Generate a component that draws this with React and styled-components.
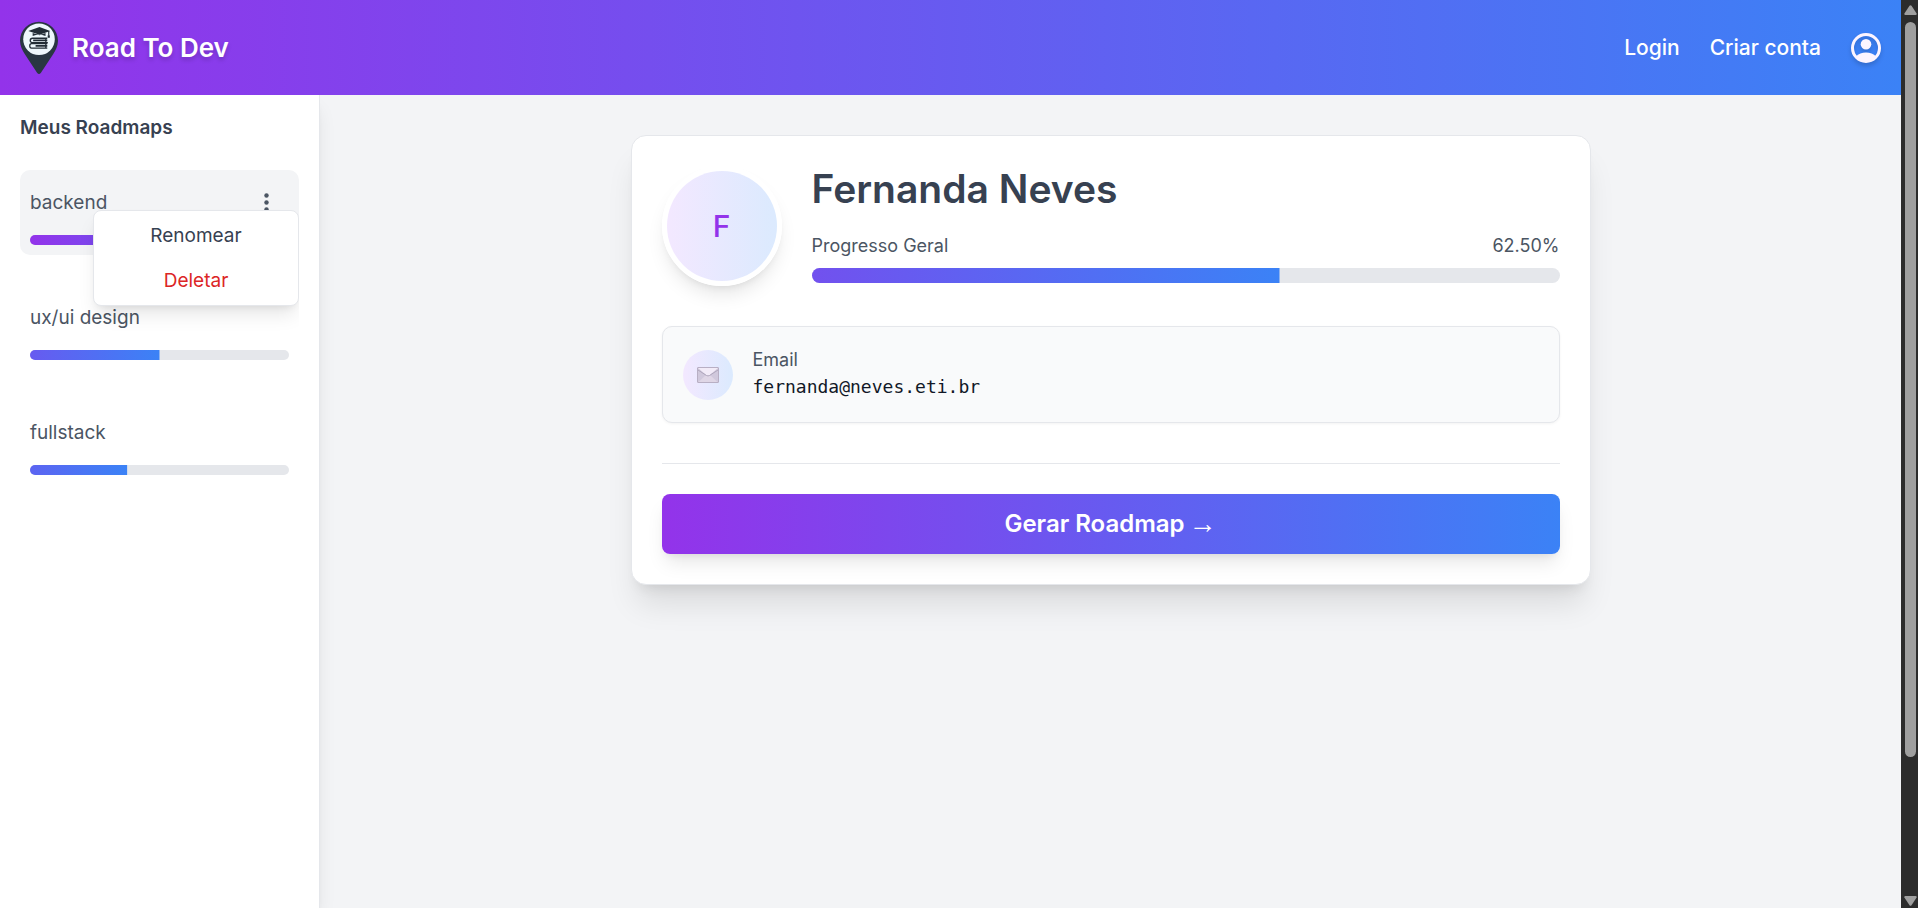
import React from "react";
import styled, { createGlobalStyle, css } from "styled-components";

const GlobalStyle = createGlobalStyle`
  *, *::before, *::after { box-sizing: border-box; }
  body {
    margin: 0;
    background: #f3f4f6;
    color: #374151;
    font-family: Inter, "Liberation Sans", sans-serif;
  }
  button { font: inherit; border: 0; background: none; padding: 0; cursor: pointer; }
  h1, h2, p, ul, dl, dd { margin: 0; padding: 0; }
  ul { list-style: none; }
`;

const brandGradient = css`
  background: linear-gradient(to right, #9333ea, #3b82f6);
`;

const Window = styled.div`
  display: flex;
  height: 100vh;
  overflow: hidden;
`;

const Page = styled.div`
  flex: 1;
  min-width: 0;
  display: flex;
  flex-direction: column;
`;

const Header = styled.header`
  ${brandGradient}
  position: relative;
  z-index: 2;
  display: flex;
  align-items: center;
  justify-content: space-between;
  height: 95px;
  flex: none;
  padding: 0 20px;
  color: #fff;
`;

const Brand = styled.a`
  display: flex;
  align-items: center;
  gap: 14px;
  color: inherit;
  text-decoration: none;
  font-size: 26px;
  font-weight: 600;
  line-height: 40px;
  text-shadow: 0 3px 4px rgba(0, 0, 0, 0.18);
`;

const Nav = styled.nav`
  display: flex;
  align-items: center;
  gap: 30px;
`;

const NavLink = styled.a`
  color: inherit;
  text-decoration: none;
  font-size: 21px;
  font-weight: 500;
  line-height: 30px;
`;

const AccountButton = styled.button`
  display: flex;
  svg { filter: drop-shadow(0 3px 2px rgba(0, 0, 0, 0.16)); }
`;

const Body = styled.div`
  flex: 1;
  min-height: 0;
  display: flex;
`;

const Sidebar = styled.aside`
  position: relative;
  z-index: 1;
  width: 320px;
  flex: none;
  padding: 20px;
  background: #fff;
  border-right: 1px solid #e5e7eb;
  box-shadow: 0 12px 19px -4px rgba(0, 0, 0, 0.1), 0 5px 8px -5px rgba(0, 0, 0, 0.1);
`;

const SidebarTitle = styled.h2`
  font-size: 19px;
  font-weight: 600;
  line-height: 25px;
  margin-bottom: 30px;
`;

const RoadmapList = styled.ul`
  display: flex;
  flex-direction: column;
  gap: 30px;
  overflow-x: clip;
`;

const RoadmapItem = styled.li`
  position: relative;
  padding: 10px;
  border-radius: 10px;
  background: ${(p) => (p.$active ? "#f3f4f6" : "transparent")};
  z-index: ${(p) => (p.$active ? 1 : 0)};
`;

const RoadmapRow = styled.div`
  display: flex;
  align-items: center;
  justify-content: space-between;
  height: 45px;
  margin-bottom: 10px;
`;

const RoadmapLink = styled.a`
  color: #4b5563;
  text-decoration: none;
  font-size: 19px;
  line-height: 25px;
`;

const KebabButton = styled.button`
  display: flex;
  align-items: center;
  justify-content: center;
  width: 45px;
  height: 45px;
`;

const Track = styled.div`
  height: ${(p) => p.$height}px;
  border-radius: 8px;
  background: #e5e7eb;
  overflow: hidden;
`;

const Indicator = styled.div`
  ${brandGradient}
  height: 100%;
`;

const Menu = styled.div`
  position: absolute;
  top: 40px;
  right: 0;
  width: 206px;
  padding: 2px;
  background: #fff;
  border: 1px solid #e5e7eb;
  border-radius: 8px;
  box-shadow: 0 12px 19px -4px rgba(0, 0, 0, 0.1), 0 5px 8px -5px rgba(0, 0, 0, 0.1);
  display: flex;
  flex-direction: column;
`;

const MenuItem = styled.button`
  height: 45px;
  font-size: 19px;
  line-height: 25px;
  color: ${(p) => (p.$danger ? "#dc2626" : "#374151")};
`;

const Main = styled.main`
  flex: 1;
  min-width: 0;
  padding: 40px;
`;

const Card = styled.section`
  max-width: 960px;
  margin: 0 auto;
  padding: 30px;
  background: #fff;
  border: 1px solid #e5e7eb;
  border-radius: 15px;
  box-shadow: 0 25px 31px -6px rgba(0, 0, 0, 0.1), 0 10px 13px -8px rgba(0, 0, 0, 0.1);
`;

const Profile = styled.div`
  display: flex;
  align-items: flex-start;
  gap: 30px;
  margin-bottom: 40px;
`;

const softGradient = css`
  background: linear-gradient(to right, #f3e8ff, #dbeafe);
`;

const Avatar = styled.div`
  width: 120px;
  height: 120px;
  flex: none;
  display: flex;
  border: 5px solid #fff;
  border-radius: 50%;
  box-shadow: 0 12px 19px -4px rgba(0, 0, 0, 0.1), 0 5px 8px -5px rgba(0, 0, 0, 0.1);
`;

const AvatarFallback = styled.span`
  ${softGradient}
  flex: 1;
  display: flex;
  align-items: center;
  justify-content: center;
  border-radius: 50%;
  color: #9333ea;
  font-size: 30px;
  font-weight: 500;
`;

const ProfileInfo = styled.div`
  flex: 1;
  min-width: 0;
`;

const Name = styled.h1`
  font-size: 39px;
  font-weight: 600;
  line-height: 45px;
  margin-bottom: 22px;
`;

const ProgressLabel = styled.div`
  display: flex;
  justify-content: space-between;
  margin-bottom: 10px;
  color: #4b5563;
  font-size: 18px;
  line-height: 25px;
`;

const Contact = styled.div`
  display: flex;
  align-items: center;
  gap: 20px;
  padding: 20px;
  background: #f9fafb;
  border: 1px solid #e5e7eb;
  border-radius: 10px;
  box-shadow: 0 1px 3px rgba(0, 0, 0, 0.05);
`;

const ContactIcon = styled.span`
  ${softGradient}
  width: 50px;
  height: 50px;
  flex: none;
  display: flex;
  align-items: center;
  justify-content: center;
  border-radius: 50%;
`;

const ContactLabel = styled.p`
  color: #4b5563;
  font-size: 18px;
  line-height: 25px;
`;

const ContactValue = styled.p`
  color: #111827;
  font-family: "DejaVu Sans Mono", "Liberation Mono", monospace;
  font-size: 18px;
  line-height: 30px;
`;

const Actions = styled.div`
  margin-top: 40px;
  padding-top: 30px;
  border-top: 1px solid #e5e7eb;
`;

const GenerateButton = styled.button`
  ${brandGradient}
  width: 100%;
  height: 60px;
  display: flex;
  align-items: center;
  justify-content: center;
  gap: 4px;
  border-radius: 8px;
  color: #fff;
  font-size: 24px;
  font-weight: 600;
  line-height: 30px;
  box-shadow: 0 12px 19px -4px rgba(0, 0, 0, 0.1), 0 5px 8px -5px rgba(0, 0, 0, 0.1);
`;

const Arrow = styled.span`
  font-family: "Liberation Serif", serif;
  font-size: 28px;
  font-weight: 400;
`;

const ScrollBar = styled.div`
  width: 17px;
  flex: none;
  display: flex;
  flex-direction: column;
  align-items: center;
  padding: 5px 1px 2px 3px;
  background: #2c2c2c;
`;

const ScrollRail = styled.div`
  flex: 1;
  width: 11px;
  margin: 7px 0 9px;
`;

const ScrollThumb = styled.div`
  height: 85%;
  border-radius: 6px;
  background: #9f9f9f;
`;

function LogoPin() {
  return (
    <svg width="38" height="54" viewBox="0 0 39 54" aria-hidden="true">
      <path d="M19.500 0C8.700 0 0 8.700 0 19.500c0 5.500 2.500 9.500 5 14L17.500 52.500q2 2.500 4 0L34 33.500c2.500-4.500 5-8.500 5-14C39 8.700 30.300 0 19.500 0z" fill="#293742" />
      <circle cx="19.500" cy="18" r="16.200" fill="#eef8fc" />
      <path d="M8.500 9.500L20 5.500l11 4-11 4z" fill="#222c35" />
      <path d="M13 11.500v3.200q6.500-2.400 13.200 0v-3.200L20 13.800z" fill="#222c35" />
      <path d="M29.500 9.500v5" stroke="#222c35" strokeWidth="1.200" />
      <path d="M28.400 14h2.200v2.500h-2.200z" fill="#222c35" />
      <g fill="none" stroke="#222c35" strokeWidth="1.300">
        <path d="M28 17H13q-2.500 0-2.500 2.200t2.500 2.200h15" />
        <path d="M28 22.500H11.800q-1.800 0-1.800 2.300t1.800 2.300H28" />
        <path d="M13.500 19.200H28M16 24.800h12" strokeWidth="1.800" />
        <path d="M28.500 21.400H12M26.500 17v4M26.500 23v4" />
      </g>
    </svg>
  );
}

function AccountIcon() {
  return (
    <svg width="30" height="30" viewBox="0 0 30 30" aria-hidden="true">
      <circle cx="15" cy="15" r="13.500" fill="none" stroke="#fdf4ff" strokeWidth="3" />
      <circle cx="15" cy="11.300" r="5.300" fill="#fdf4ff" />
      <path d="M4.800 23.500C7.500 20.800 11 19.500 15 19.500s7.500 1.300 10.200 4A14 14 0 0 1 15 29a14 14 0 0 1-10.200-5.500z" fill="#fdf4ff" />
    </svg>
  );
}

function KebabIcon() {
  return (
    <svg width="5" height="19" viewBox="0 0 5 19" fill="#4b5563" aria-hidden="true">
      <circle cx="2.500" cy="2.500" r="2.200" />
      <circle cx="2.500" cy="9.500" r="2.200" />
      <circle cx="2.500" cy="16.500" r="2.200" />
    </svg>
  );
}

function EnvelopeIcon() {
  return (
    <svg width="22" height="16" viewBox="0 0 22 16" aria-hidden="true">
      <rect x="0.500" y="0.500" width="21" height="15" rx="0.500" fill="#d0c8dc" />
      <path d="M1 15.500l7.500-7h5l7.500 7z" fill="#dfd6e6" />
      <path d="M1 1h20l-8.500 7.200q-1.500 1-3 0z" fill="#f2ebf8" />
      <path d="M1 3l8.500 5.500q1.500.8 3 0L21 3" fill="none" stroke="#aaa1b8" strokeWidth="0.900" />
      <rect x="0.500" y="0.500" width="21" height="15" rx="0.500" fill="none" stroke="#b8afc4" />
    </svg>
  );
}

function Progress({ value, height, label }) {
  return (
    <Track
      $height={height}
      role="progressbar"
      aria-label={label}
      aria-valuenow={value}
      aria-valuemin={0}
      aria-valuemax={100}
    >
      <Indicator style={{ transform: `translateX(-${100 - value}%)` }} />
    </Track>
  );
}

const roadmaps = [
  { name: "backend", progress: 100, menuOpen: true },
  { name: "ux/ui design", progress: 50 },
  { name: "fullstack", progress: 37.5 },
];

function Roadmap({ name, progress, menuOpen }) {
  return (
    <RoadmapItem $active={menuOpen}>
      <RoadmapRow>
        <RoadmapLink href="#">{name}</RoadmapLink>
        {menuOpen && (
          <KebabButton aria-label="Opções">
            <KebabIcon />
          </KebabButton>
        )}
      </RoadmapRow>
      <Progress value={progress} height={10} label={name} />
      {menuOpen && (
        <Menu>
          <MenuItem>Renomear</MenuItem>
          <MenuItem $danger>Deletar</MenuItem>
        </Menu>
      )}
    </RoadmapItem>
  );
}

export default function App() {
  return (
    <Window>
      <GlobalStyle />
      <Page>
        <Header>
          <Brand href="#">
            <LogoPin />
            Road To Dev
          </Brand>
          <Nav>
            <NavLink href="#">Login</NavLink>
            <NavLink href="#">Criar conta</NavLink>
            <AccountButton aria-label="Perfil">
              <AccountIcon />
            </AccountButton>
          </Nav>
        </Header>
        <Body>
          <Sidebar>
            <SidebarTitle>Meus Roadmaps</SidebarTitle>
            <RoadmapList>
              {roadmaps.map((r) => (
                <Roadmap key={r.name} {...r} />
              ))}
            </RoadmapList>
          </Sidebar>
          <Main>
            <Card>
              <Profile>
                <Avatar>
                  <AvatarFallback>F</AvatarFallback>
                </Avatar>
                <ProfileInfo>
                  <Name>Fernanda Neves</Name>
                  <ProgressLabel>
                    <span>Progresso Geral</span>
                    <span>62.50%</span>
                  </ProgressLabel>
                  <Progress value={62.5} height={15} label="Progresso Geral" />
                </ProfileInfo>
              </Profile>
              <Contact>
                <ContactIcon>
                  <EnvelopeIcon />
                </ContactIcon>
                <div>
                  <ContactLabel>Email</ContactLabel>
                  <ContactValue>fernanda@neves.eti.br</ContactValue>
                </div>
              </Contact>
              <Actions>
                <GenerateButton>
                  Gerar Roadmap <Arrow>→</Arrow>
                </GenerateButton>
              </Actions>
            </Card>
          </Main>
        </Body>
      </Page>
      <ScrollBar aria-hidden="true">
        <svg width="13" height="10" viewBox="0 0 13 10" fill="#9f9f9f">
          <path d="M5.500.8q1-1.300 2 0L12.600 8.500q.4 1.500-1 1.500H1.400Q0 10 .4 8.500z" />
        </svg>
        <ScrollRail>
          <ScrollThumb />
        </ScrollRail>
        <svg width="13" height="10" viewBox="0 0 13 10" fill="#9f9f9f">
          <path d="M5.500 9.200q1 1.300 2 0L12.600 1.500q.4-1.500-1-1.500H1.400Q0 0 .4 1.500z" />
        </svg>
      </ScrollBar>
    </Window>
  );
}
